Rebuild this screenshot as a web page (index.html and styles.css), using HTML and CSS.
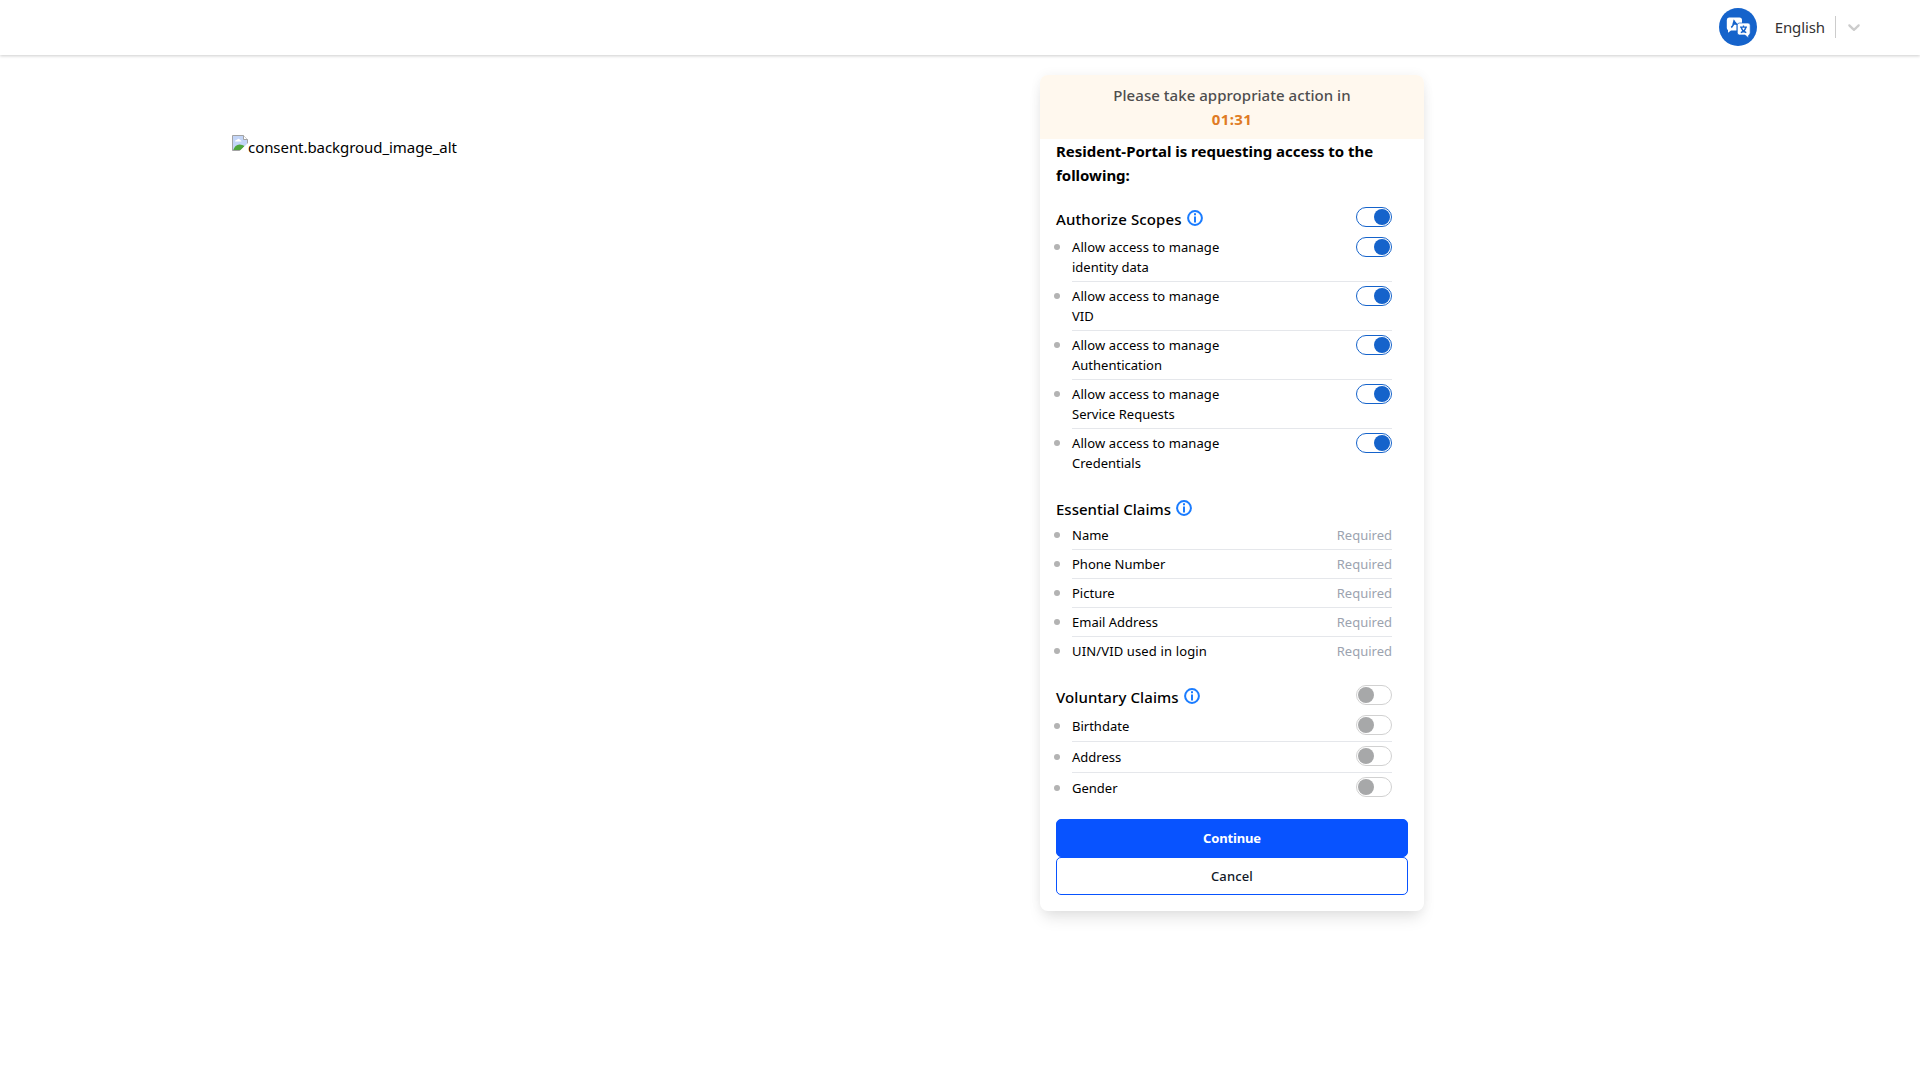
FILE: index.html
```html
<!DOCTYPE html>
<html lang="en">
<head><meta charset="utf-8"><title>Consent</title><link rel="stylesheet" href="styles.css"></head>
<body>
<header class="topbar">
  <svg class="lang-icon" viewBox="0 0 38 38"><circle cx="19" cy="19" r="19" fill="#1563cb"/><path d="M10 9.500h10.500q2.500 0 2.500 2.500v4h-3q-2.500 0-2.500 2.500v4h-5.500l-3 2.200v-2.700q-1.200-.6-1.200-2V12q0-2.500 2.200-2.500z" fill="#fff"/><path d="M12.300 19.500q2.500-2 3-6l2.700 3.500M15.300 12.500l-1 3.500h4" fill="none" stroke="#1563cb" stroke-width="1.700"/><path d="M20.500 15h8.500q2.200 0 2.200 2.200v7.600q0 2-1.400 2.200l-.5 2.700-3.300-2.700h-5.500q-2.200 0-2.200-2.200v-7.600q0-2.200 2.200-2.200z" fill="#fff" stroke="#1563cb" stroke-width=".7"/><path d="M21 19.200h7M24.500 17.500v1.700M26.800 19.700q-1 3.500-5 5M22.300 19.700q1 3.500 5 5" fill="none" stroke="#1563cb" stroke-width="1.300"/></svg>
  <span class="lang">English</span>
  <span class="divider"></span>
  <svg class="chevron" viewBox="0 0 20 20"><path fill="#ccc" d="M4.516 7.548c0.436-0.446 1.043-0.481 1.576 0l3.908 3.747 3.908-3.747c0.533-0.481 1.141-0.446 1.574 0 0.436 0.445 0.408 1.197 0 1.615-0.406 0.418-4.695 4.502-4.695 4.502-0.217 0.223-0.502 0.335-0.787 0.335s-0.570-0.112-0.789-0.335c0 0-4.287-4.084-4.695-4.502s-0.436-1.170 0-1.615z"/></svg>
</header>
<main class="page">
  <div class="illustration">
    <svg class="broken" viewBox="0 0 16 16"><path d="M.5.500h11l4 4v11H.5z" fill="#c3d5f7"/><path d="M3 6.500q0-1.800 2-1.800 2-2 3 .3 1.500 0 1.500 1.500z" fill="#fff"/><path d="M1 15.500q2-6 6.500-6 3 0 5 1.500L9 15.500z" fill="#4fa63c"/><path d="M.5.500h11l4 4v11H.5z" fill="none" stroke="#a3a3a3"/><path d="M11.500.500v4h4" fill="#fff" stroke="#a3a3a3"/><path d="M7.500 16L16 8v3l-5.500 5z" fill="#fff"/><path d="M10 16l6-6v6z" fill="#fff"/></svg>
    <span class="alt">consent.backgroud_image_alt</span>
  </div>
  <section class="card">
    <div class="banner"><p class="notice">Please take appropriate action in</p><p class="timer">01:31</p></div>
    <div class="content">
      <h1 class="title">Resident-Portal is requesting access to the following:</h1>
      <div class="group scopes">
        <div class="group-head"><h2>Authorize Scopes</h2><svg class="info" viewBox="0 0 16 16"><circle cx="8" cy="8" r="6.900"/><path d="M8 6.500v6M8 3.300v2"/></svg><span class="toggle on"></span></div>
        <ul>
          <li><span class="label"><span class="access">Allow access to manage</span><br>identity data</span><span class="toggle on"></span></li>
          <li><span class="label"><span class="access">Allow access to manage</span><br>VID</span><span class="toggle on"></span></li>
          <li><span class="label"><span class="access">Allow access to manage</span><br>Authentication</span><span class="toggle on"></span></li>
          <li><span class="label"><span class="access">Allow access to manage</span><br>Service Requests</span><span class="toggle on"></span></li>
          <li><span class="label"><span class="access">Allow access to manage</span><br>Credentials</span><span class="toggle on"></span></li>
        </ul>
      </div>
      <div class="group essential">
        <div class="group-head"><h2>Essential Claims</h2><svg class="info" viewBox="0 0 16 16"><circle cx="8" cy="8" r="6.900"/><path d="M8 6.500v6M8 3.300v2"/></svg></div>
        <ul>
          <li><span class="label">Name</span><span class="required">Required</span></li>
          <li><span class="label">Phone Number</span><span class="required">Required</span></li>
          <li><span class="label">Picture</span><span class="required">Required</span></li>
          <li><span class="label">Email Address</span><span class="required">Required</span></li>
          <li><span class="label login-id">UIN/VID used in login</span><span class="required">Required</span></li>
        </ul>
      </div>
      <div class="group voluntary">
        <div class="group-head"><h2>Voluntary Claims</h2><svg class="info" viewBox="0 0 16 16"><circle cx="8" cy="8" r="6.900"/><path d="M8 6.500v6M8 3.300v2"/></svg><span class="toggle"></span></div>
        <ul>
          <li><span class="label">Birthdate</span><span class="toggle"></span></li>
          <li><span class="label">Address</span><span class="toggle"></span></li>
          <li><span class="label">Gender</span><span class="toggle"></span></li>
        </ul>
      </div>
      <button class="btn primary">Continue</button>
      <button class="btn secondary">Cancel</button>
    </div>
  </section>
</main>
</body>
</html>
```
FILE: styles.css
```css
* { box-sizing: border-box; margin: 0; padding: 0; }
body { height: 1080px; overflow: hidden; background: #fff; color: #000; font: 15px/24px "Noto Sans", sans-serif; }
.topbar { height: 55px; display: flex; align-items: center; justify-content: flex-end; padding: 0 56px 1px 0; box-shadow: 0 1px 3px rgba(0,0,0,.2); }
.lang-icon { width: 38px; height: 38px; margin-right: 18px; }
.lang { color: #333; letter-spacing: -.1px; }
.divider { width: 1px; height: 22px; background: #ccc; margin: 0 8px 0 10px; }
.chevron { width: 20px; height: 20px; }
.page { display: flex; justify-content: space-between; align-items: flex-start; padding: 20px 496px 0 232px; }
.illustration { display: flex; padding-top: 60px; letter-spacing: -.06px; }
.broken { width: 16px; height: 16px; }
.card { width: 384px; height: 836px; border-radius: 8px; box-shadow: 0 10px 15px -3px rgba(0,0,0,.1), 0 0 12px rgba(0,0,0,.05); }
.banner { height: 64px; padding-top: 8px; border-radius: 8px 8px 0 0; background: #fff8ee; text-align: center; }
.notice { color: #4e4e4e; font-weight: 500; letter-spacing: .04px; }
.timer { color: #e07b24; font-weight: 700; letter-spacing: .4px; }
.content { padding: 0 16px; }
.title { font-size: 15px; line-height: 24px; font-weight: 700; letter-spacing: -.02px; }
.group { padding-right: 16px; }
.scopes { padding-top: 20px; }
.essential { padding-top: 20px; }
.voluntary { padding: 20px 16px 16px 0; }
.group-head { display: flex; height: 30px; }
.essential .group-head { height: 28px; }
h2 { font-size: 15px; line-height: 24px; font-weight: 500; }
.scopes h2 { letter-spacing: .13px; }
.voluntary h2 { letter-spacing: .1px; }
.info { width: 16px; height: 16px; margin: 3px 0 0 5px; fill: none; stroke: #1a7cff; stroke-width: 2; }
.toggle { width: 36px; height: 20px; flex: none; margin-left: auto; padding: 1px; border: 1px solid #d1d1d1; border-radius: 10px; }
.toggle::before { content: ""; display: block; width: 16px; height: 16px; border-radius: 50%; background: #a7a8a9; }
.toggle.on { border-color: #1563cb; }
.toggle.on::before { margin-left: 16px; background: #1563cb; }
ul { list-style: none; padding-left: 16px; }
li { position: relative; display: flex; justify-content: space-between; font-size: 13px; line-height: 20px; padding-bottom: 4px; }
li:not(:last-child) { border-bottom: 1px solid #e5e7eb; margin-bottom: 4px; }
li::before { content: ""; position: absolute; left: -18px; top: 7px; width: 6px; height: 6px; border-radius: 50%; background: #b3b3b3; }
.access { letter-spacing: .1px; }
.login-id { letter-spacing: .14px; }
.voluntary .label { padding: 1px 0; }
.voluntary li::before { top: 8px; }
.required { color: #9ca3af; }
.btn { display: block; width: 100%; height: 38px; border: 1px solid #0853ff; border-radius: 5px; font: 500 13px/20px "Noto Sans", sans-serif; }
.primary { background: #0853ff; color: #fff; font-weight: 700; letter-spacing: -.15px; }
.secondary { background: #fff; color: #111827; letter-spacing: .15px; }
```
